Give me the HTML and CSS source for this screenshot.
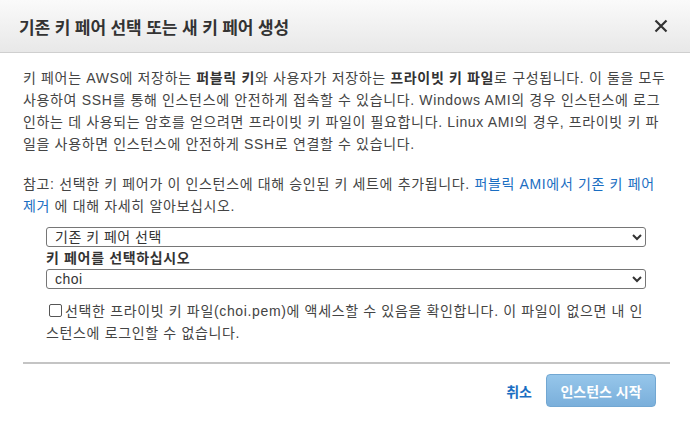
FILE: index.html
```html
<!DOCTYPE html>
<html lang="ko">
<head>
<meta charset="utf-8">
<link rel="stylesheet" href="styles.css">
</head>
<body>
<div class="modal">
  <div class="modal-header">
    <h1 class="modal-title">기존 키 페어 선택 또는 새 키 페어 생성</h1>
    <button class="close" aria-label="닫기">
      <svg width="14" height="14" viewBox="0 0 14 14"><path d="M1.5 1.5 L12.5 12.5 M12.5 1.5 L1.5 12.5" stroke="#333" stroke-width="2.2" fill="none"/></svg>
    </button>
  </div>
  <div class="modal-body">
    <p class="para">키 페어는 AWS에 저장하는 <b>퍼블릭 키</b>와 사용자가 저장하는 <b>프라이빗 키 파일</b>로 구성됩니다. 이 둘을 모두 사용하여 SSH를 통해 인스턴스에 안전하게 접속할 수 있습니다. Windows AMI의 경우 인스턴스에 로그인하는 데 사용되는 암호를 얻으려면 프라이빗 키 파일이 필요합니다. Linux AMI의 경우, 프라이빗 키 파일을 사용하면 인스턴스에 안전하게 SSH로 연결할 수 있습니다.</p>
    <p class="para">참고: 선택한 키 페어가 이 인스턴스에 대해 승인된 키 세트에 추가됩니다. <a class="link" href="#">퍼블릭 AMI에서 기존 키 페어 제거</a> 에 대해 자세히 알아보십시오.</p>
    <div class="form">
      <select class="select"><option>기존 키 페어 선택</option></select>
      <div class="label">키 페어를 선택하십시오</div>
      <select class="select"><option>choi</option></select>
      <label class="ack"><span class="box"></span>선택한 프라이빗 키 파일(choi.pem)에 액세스할 수 있음을 확인합니다. 이 파일이 없으면 내 인스턴스에 로그인할 수 없습니다.</label>
    </div>
  </div>
  <div class="modal-footer">
    <a class="cancel" href="#">취소</a>
    <button class="primary">인스턴스 시작</button>
  </div>
</div>
</body>
</html>
```

FILE: styles.css
```css
html, body {
  margin: 0;
  padding: 0;
  background: #fff;
}
body {
  font-family: "Liberation Sans", "Noto Sans CJK KR", sans-serif;
  color: #444;
  font-size: 14px;
}
.modal {
  width: 690px;
  height: 421px;
  display: flex;
  flex-direction: column;
}
.modal-header {
  height: 53px;
  box-sizing: border-box;
  border-bottom: 1px solid #cfcfcf;
  background: linear-gradient(#fafafa, #e8e8e8);
  display: flex;
  align-items: center;
  justify-content: space-between;
  padding: 0 22px 0 19px;
}
.modal-title {
  margin: 0;
  font-size: 17px;
  font-weight: bold;
  color: #333;
  letter-spacing: -0.1px;
}
.close {
  border: 0;
  background: none;
  padding: 0;
  width: 14px;
  height: 14px;
  display: flex;
}
.modal-body {
  padding: 14px 19px 0 23px;
  letter-spacing: 0.65px;
}
.para {
  margin: 0 0 18px 0;
  line-height: 22px;
}
.para b {
  color: #333;
}
.link {
  color: #1a6ec2;
  text-decoration: none;
}
.form {
  margin: -8px 0 0 23px;
  width: 600px;
}
.select {
  display: block;
  width: 600px;
  height: 20px;
  box-sizing: border-box;
  border: 1px solid #767676;
  border-radius: 3px;
  background: #fff;
  font-family: inherit;
  font-size: 14px;
  color: #333;
  padding: 0 0 0 4px;
  letter-spacing: 0.5px;
}
.label {
  font-weight: bold;
  color: #333;
  line-height: 22px;
}
.ack {
  display: block;
  margin-top: 11px;
  line-height: 22px;
}
.box {
  display: inline-block;
  width: 11px;
  height: 11px;
  border: 1px solid #555;
  border-radius: 2px;
  margin: 0 3px 0 3px;
  vertical-align: -1px;
}
.modal-footer {
  margin: 18px 20px 0 23px;
  border-top: 2px solid #c4c4c4;
  padding-top: 10px;
  display: flex;
  justify-content: flex-end;
  align-items: center;
  gap: 14px;
  padding-right: 14px;
}
.cancel {
  color: #1a6ec2;
  font-weight: bold;
  text-decoration: none;
}
.primary {
  width: 110px;
  height: 33px;
  border: 1px solid #72a7d2;
  border-radius: 4px;
  background: linear-gradient(#96c6ea, #7aafdb);
  color: #fff;
  font-family: inherit;
  font-weight: bold;
  font-size: 14px;
}
```
